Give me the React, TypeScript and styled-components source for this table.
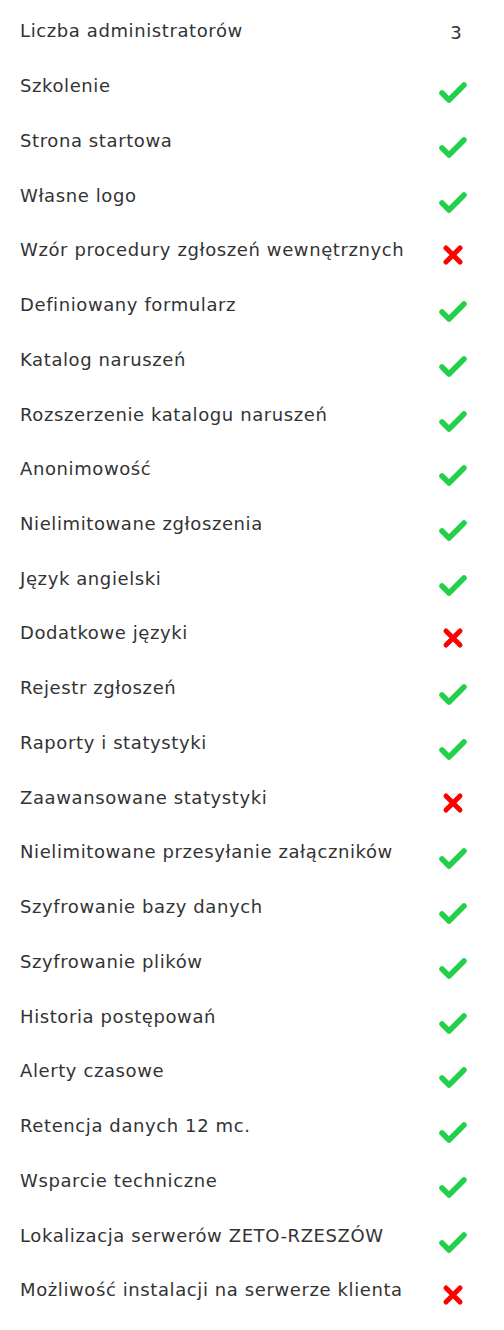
import styled, { createGlobalStyle } from "styled-components";

const GlobalStyle = createGlobalStyle`
  html, body {
    margin: 0;
    padding: 0;
    background: #ffffff;
  }
  body {
    font-family: "DejaVu Sans", "Noto Sans", sans-serif;
  }
`;

const List = styled.ul`
  list-style: none;
  margin: 0;
  padding: 4px 21px 0 20px;
  width: 504px;
  box-sizing: border-box;
`;

const Row = styled.li`
  display: grid;
  grid-template-columns: 1fr 60px;
  align-items: center;
  height: 54.74px;
`;

const Label = styled.span`
  font-size: 18px;
  line-height: 24px;
  letter-spacing: 0.6px;
  color: #333333;
  white-space: nowrap;
`;

const Value = styled.span<{ $offset?: number; $shift?: number }>`
  display: flex;
  justify-content: center;
  align-items: center;
  font-size: 18px;
  color: #333333;
  padding-left: ${(p) => p.$shift ?? 0}px;
  transform: translateY(${(p) => p.$offset ?? 0}px);
`;

type Feature = { label: string; value: "yes" | "no" | string };

const features: Feature[] = [
  { label: "Liczba administratorów", value: "3" },
  { label: "Szkolenie", value: "yes" },
  { label: "Strona startowa", value: "yes" },
  { label: "Własne logo", value: "yes" },
  { label: "Wzór procedury zgłoszeń wewnętrznych", value: "no" },
  { label: "Definiowany formularz", value: "yes" },
  { label: "Katalog naruszeń", value: "yes" },
  { label: "Rozszerzenie katalogu naruszeń", value: "yes" },
  { label: "Anonimowość", value: "yes" },
  { label: "Nielimitowane zgłoszenia", value: "yes" },
  { label: "Język angielski", value: "yes" },
  { label: "Dodatkowe języki", value: "no" },
  { label: "Rejestr zgłoszeń", value: "yes" },
  { label: "Raporty i statystyki", value: "yes" },
  { label: "Zaawansowane statystyki", value: "no" },
  { label: "Nielimitowane przesyłanie załączników", value: "yes" },
  { label: "Szyfrowanie bazy danych", value: "yes" },
  { label: "Szyfrowanie plików", value: "yes" },
  { label: "Historia postępowań", value: "yes" },
  { label: "Alerty czasowe", value: "yes" },
  { label: "Retencja danych 12 mc.", value: "yes" },
  { label: "Wsparcie techniczne", value: "yes" },
  { label: "Lokalizacja serwerów ZETO-RZESZÓW", value: "yes" },
  { label: "Możliwość instalacji na serwerze klienta", value: "no" },
];

const CheckIcon = () => (
  <svg width="30" height="24" viewBox="0 0 30 24">
    <path
      d="M4 13 L11 20 L26 5"
      fill="none"
      stroke="#22d04a"
      strokeWidth="5.5"
      strokeLinecap="round"
      strokeLinejoin="round"
    />
  </svg>
);

const CrossIcon = () => (
  <svg width="22" height="22" viewBox="0 0 22 22">
    <path
      d="M4 4 L18 18 M18 4 L4 18"
      fill="none"
      stroke="#ff0000"
      strokeWidth="5"
      strokeLinecap="round"
    />
  </svg>
);

const App = () => {
  return (
    <>
      <GlobalStyle />
      <List>
        {features.map((f) => (
          <Row key={f.label}>
            <Label>{f.label}</Label>
            {f.value === "yes" ? (
              <Value $offset={6}>
                <CheckIcon />
              </Value>
            ) : f.value === "no" ? (
              <Value $offset={5}>
                <CrossIcon />
              </Value>
            ) : (
              <Value $offset={1} $shift={6}>
                {f.value}
              </Value>
            )}
          </Row>
        ))}
      </List>
    </>
  );
};

export default App;
